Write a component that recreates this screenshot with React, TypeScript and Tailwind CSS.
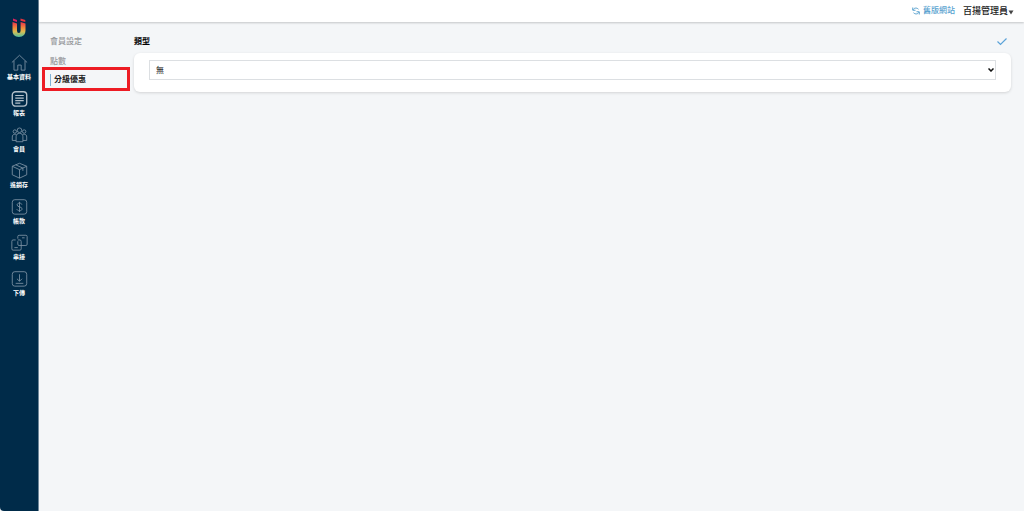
import type { ReactNode } from 'react'

type NavItem = {
  label: string
  icon: ReactNode
}

const navItems: NavItem[] = [
  {
    label: '基本資料',
    icon: <path d="M1 10 10 1.500l9 8.500M3.500 8v11H8v-6h4v6h4.500V8" />,
  },
  {
    label: '報表',
    icon: (
      <>
        <rect x="1.500" y="2" width="17" height="17" rx="4" strokeWidth="1.600" />
        <path d="M5 6.500h10M5 9.500h10M5 12.500h10M5 15.500h6" strokeWidth="1.400" />
      </>
    ),
  },
  {
    label: '會員',
    icon: (
      <>
        <circle cx="10" cy="5" r="2.7" />
        <circle cx="4.500" cy="6.500" r="2" />
        <circle cx="15.500" cy="6.500" r="2" />
        <path d="M6 18.500v-6c0-2.400 1.500-3.900 4-3.900s4 1.500 4 3.900v6zM6 17H1.500v-4c0-2 1-3.300 3-3.300.7 0 1.300.2 1.800.5M14 17h4.500v-4c0-2-1-3.300-3-3.300-.7 0-1.300.2-1.800.5" />
      </>
    ),
  },
  {
    label: '進銷存',
    icon: (
      <path d="M10 1.500 18.500 5v10L10 19l-8.500-4V5zM1.500 5 10 9l8.500-4M10 9v10M5.500 3.300 14 7.200v3.300" />
    ),
  },
  {
    label: '帳款',
    icon: (
      <>
        <rect x="1.500" y="2" width="17" height="17" rx="3" />
        <path d="M12.800 7.700c-.3-1.100-1.300-1.700-2.800-1.700-1.700 0-2.800.8-2.800 2.100 0 3.200 5.800 1.500 5.800 4.700 0 1.400-1.200 2.200-3 2.200s-2.900-.8-3.100-2M10 4.500v12" />
      </>
    ),
  },
  {
    label: '串接',
    icon: (
      <>
        <path d="M8 5.500V3q0-1.500 1.500-1.500h8Q19 1.500 19 3v9q0 1.500-1.500 1.500h-8Q8 13.500 8 12V8.500" />
        <path d="M5.500 7h-3Q1 7 1 8.500v9Q1 19 2.500 19h8q1.500 0 1.500-1.500V9q0-2-1.500-2H8" />
        <path d="M13 4.500h3M4 16h4" />
      </>
    ),
  },
  {
    label: '下傳',
    icon: (
      <>
        <rect x="1.500" y="2" width="17" height="17" rx="3" />
        <path d="M10 5v8M7 10.300l3 3 3-3M5.500 15.700h9" />
      </>
    ),
  },
]

function Logo() {
  return (
    <svg aria-hidden="true" className="h-5 w-4" viewBox="0 0 16 20">
      <defs>
        <linearGradient id="logo-fill" x1="0" y1="0" x2="0" y2="1">
          <stop offset="0" stopColor="#e8304a" />
          <stop offset="0.4" stopColor="#f08a3c" />
          <stop offset="0.65" stopColor="#d9bd52" />
          <stop offset="1" stopColor="#4fc0a0" />
        </linearGradient>
      </defs>
      <path d="M2 .500 6 2V4L2 2.800z" fill="#d9235f" />
      <path d="M9.500.500 14.300 2V4L9.500 2.800z" fill="#e5323e" />
      <path
        d="M1.500 4 6 5.400v7.400q0 2.200 1.800 2.200t1.800-2.200V4l4.900 1.400v7.100q0 6.500-6.600 6.500t-6.400-6.500z"
        fill="url(#logo-fill)"
      />
    </svg>
  )
}

function Sidebar() {
  return (
    <aside className="flex w-[39px] shrink-0 flex-col items-center rounded-bl border-r border-[#6f8799] bg-[#002b49] pt-[18px]">
      <Logo />
      <nav aria-label="主選單" className="mt-4 w-full">
        {navItems.map((item) => (
          <a
            className="flex h-9 flex-col items-center gap-0.5 text-white"
            href="#"
            key={item.label}
          >
            <svg
              aria-hidden="true"
              className={[
                'size-[17px]',
                item.label === '報表' ? 'text-[#b4c1cb]' : 'text-[#7e94a5]',
              ].join(' ')}
              fill="none"
              stroke="currentColor"
              strokeLinejoin="round"
              viewBox="0 0 20 20"
            >
              {item.icon}
            </svg>
            <span className="text-[6px] leading-[8px] font-bold whitespace-nowrap">
              {item.label}
            </span>
          </a>
        ))}
      </nav>
    </aside>
  )
}

function TopBar() {
  return (
    <header className="flex h-[22px] items-center justify-end gap-2 bg-white pr-2.5 shadow-[0_1px_2px_rgba(0,0,0,0.2)]">
      <a className="flex items-center gap-[3px] text-[8px] font-medium text-[#5ba3d0]" href="#">
        <svg
          aria-hidden="true"
          className="size-2"
          fill="none"
          stroke="currentColor"
          strokeWidth="2"
          viewBox="0 0 16 16"
        >
          <path d="M1.500 1v5.500H7M2 6C3.500 2 9 .5 13 4.500M14.500 15V9.500H9M14 10c-1.500 4-7 5.500-11 1.500" />
        </svg>
        舊版網站
      </a>
      <button className="flex items-center pt-px text-[9px] font-medium text-[#222]" type="button">
        百揚管理員
        <svg aria-hidden="true" className="size-1.5" fill="#444" viewBox="0 0 6 6">
          <path d="M.5 1.500h5L3 5.500z" />
        </svg>
      </button>
    </header>
  )
}

function SubNav() {
  return (
    <nav
      aria-label="會員"
      className="ml-[3px] flex w-[88px] shrink-0 flex-col pt-2.5 text-[8px] font-medium text-[#97999c]"
    >
      <a className="flex h-5 items-center pl-2" href="#">
        會員設定
      </a>
      <a className="flex h-4 items-end pl-2" href="#">
        點數
      </a>
      <a
        aria-current="page"
        className="-mt-px flex h-6 items-center border-[3px] border-[#ed1c24] pt-px pl-[5px] font-bold text-[#222]"
        href="#"
      >
        <span className="flex h-3 items-center border-l border-[#7fb2d6] pl-[3px]">分級優惠</span>
      </a>
    </nav>
  )
}

export default function App() {
  return (
    <div className="flex min-h-screen bg-[#f4f6f8] font-['Liberation_Sans','Noto_Sans_CJK_TC',sans-serif]">
      <Sidebar />
      <div className="flex min-w-0 flex-1 flex-col">
        <TopBar />
        <div className="flex flex-1">
          <SubNav />
          <main className="min-w-0 flex-1 pt-[13px] pr-[13px] pl-1">
            <div className="flex h-[14px] items-center justify-between pr-1">
              <label className="text-[8px] font-bold text-black" htmlFor="discount-type">
                類型
              </label>
              <button aria-label="儲存" className="text-[#5ba3d8]" type="button">
                <svg
                  aria-hidden="true"
                  className="h-2 w-2.5"
                  fill="none"
                  stroke="currentColor"
                  strokeWidth="1.200"
                  viewBox="0 0 10 8"
                >
                  <path d="M.5 3.500 3.500 6.500 9.500.5" />
                </svg>
              </button>
            </div>
            <section className="mt-1 rounded-md bg-white px-[15px] pt-[7px] pb-3 shadow-[0_1px_3px_rgba(0,0,0,0.14)]">
              <div className="relative">
                <select
                  className="block h-5 w-full appearance-none border border-[#dcdfe2] bg-white px-1.5 pt-px text-[8px] text-black"
                  id="discount-type"
                >
                  <option>無</option>
                </select>
                <svg
                  aria-hidden="true"
                  className="pointer-events-none absolute top-2 right-0.5 h-1 w-1.5"
                  fill="none"
                  stroke="#111"
                  strokeWidth="1.500"
                  viewBox="0 0 6 4"
                >
                  <path d="M.5.500 3 3 5.500.500" />
                </svg>
              </div>
            </section>
          </main>
        </div>
      </div>
    </div>
  )
}
